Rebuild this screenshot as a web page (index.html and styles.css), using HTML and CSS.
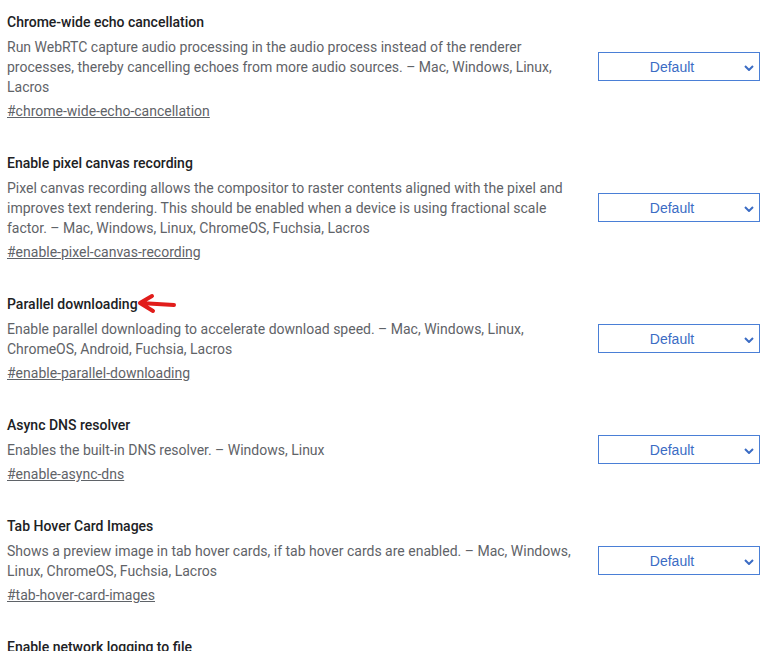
FILE: index.html
```html
<!DOCTYPE html>
<html lang="en">
<head>
    <meta charset="UTF-8">
    <title>Experiments</title>
    <link rel="stylesheet" href="styles.css">
</head>
<body>
    <div class="experiments">
        <div class="experiment">
            <div class="info">
                <div class="name">Chrome-wide echo cancellation</div>
                <p class="desc">Run WebRTC capture audio processing in the audio process instead of the renderer processes, thereby cancelling echoes from more audio sources. – Mac, Windows, Linux, Lacros</p>
                <a class="permalink" href="#chrome-wide-echo-cancellation">#chrome-wide-echo-cancellation</a>
            </div>
            <div class="select">Default
                <svg class="chevron" width="10" height="6" viewBox="0 0 10 6"><path d="M1 1l4 4 4-4" fill="none" stroke="#3b6cc4" stroke-width="2"/></svg>
            </div>
        </div>

        <div class="experiment">
            <div class="info">
                <div class="name">Enable pixel canvas recording</div>
                <p class="desc">Pixel canvas recording allows the compositor to raster contents aligned with the pixel and improves text rendering. This should be enabled when a device is using fractional scale factor. – Mac, Windows, Linux, ChromeOS, Fuchsia, Lacros</p>
                <a class="permalink" href="#enable-pixel-canvas-recording">#enable-pixel-canvas-recording</a>
            </div>
            <div class="select">Default
                <svg class="chevron" width="10" height="6" viewBox="0 0 10 6"><path d="M1 1l4 4 4-4" fill="none" stroke="#3b6cc4" stroke-width="2"/></svg>
            </div>
        </div>

        <div class="experiment">
            <div class="info">
                <div class="name"><span class="marked">Parallel downloading<svg class="arrow" width="42" height="22" viewBox="0 0 42 22"><path d="M4 10 L38 12 M4 10 L16 3 M4 10 L17 18" fill="none" stroke="#e11d1b" stroke-width="4" stroke-linecap="round" stroke-linejoin="round"/></svg></span></div>
                <p class="desc">Enable parallel downloading to accelerate download speed. – Mac, Windows, Linux, ChromeOS, Android, Fuchsia, Lacros</p>
                <a class="permalink" href="#enable-parallel-downloading">#enable-parallel-downloading</a>
            </div>
            <div class="select">Default
                <svg class="chevron" width="10" height="6" viewBox="0 0 10 6"><path d="M1 1l4 4 4-4" fill="none" stroke="#3b6cc4" stroke-width="2"/></svg>
            </div>
        </div>

        <div class="experiment">
            <div class="info">
                <div class="name">Async DNS resolver</div>
                <p class="desc">Enables the built-in DNS resolver. – Windows, Linux</p>
                <a class="permalink" href="#enable-async-dns">#enable-async-dns</a>
            </div>
            <div class="select">Default
                <svg class="chevron" width="10" height="6" viewBox="0 0 10 6"><path d="M1 1l4 4 4-4" fill="none" stroke="#3b6cc4" stroke-width="2"/></svg>
            </div>
        </div>

        <div class="experiment">
            <div class="info">
                <div class="name">Tab Hover Card Images</div>
                <p class="desc">Shows a preview image in tab hover cards, if tab hover cards are enabled. – Mac, Windows, Linux, ChromeOS, Fuchsia, Lacros</p>
                <a class="permalink" href="#tab-hover-card-images">#tab-hover-card-images</a>
            </div>
            <div class="select">Default
                <svg class="chevron" width="10" height="6" viewBox="0 0 10 6"><path d="M1 1l4 4 4-4" fill="none" stroke="#3b6cc4" stroke-width="2"/></svg>
            </div>
        </div>

        <div class="experiment">
            <div class="info">
                <div class="name">Enable network logging to file</div>
            </div>
        </div>
    </div>
</body>
</html>
```

FILE: styles.css
```css
body {
    margin: 0;
    padding: 0;
    background-color: #fff;
    font-family: Roboto, 'Noto Sans', sans-serif;
    font-size: 14px;
    color: #5f6368;
}

.experiments {
    padding-top: 12px;
}

.experiment {
    display: flex;
    align-items: center;
    padding: 0 8px 32px 7px;
}

.info {
    width: 571px;
    flex-shrink: 0;
}

.name {
    font-weight: 500;
    color: #202124;
    line-height: 20px;
}

.marked {
    position: relative;
}

.arrow {
    position: absolute;
    left: calc(100% - 2px);
    top: -3px;
}

.desc {
    margin: 5px 0 0 0;
    line-height: 20px;
}

.permalink {
    display: inline-block;
    margin-top: 4px;
    line-height: 20px;
    color: #5f6368;
    text-decoration: underline;
}

.select {
    margin-left: 20px;
    width: 147px;
    height: 27px;
    padding-right: 14px;
    border: 1px solid #4a7fd6;
    display: flex;
    align-items: center;
    justify-content: center;
    position: relative;
    font-family: 'Liberation Sans', Arial, sans-serif;
    font-size: 14px;
    color: #3b6cc4;
}

.chevron {
    position: absolute;
    right: 5px;
    top: 12px;
}
```
